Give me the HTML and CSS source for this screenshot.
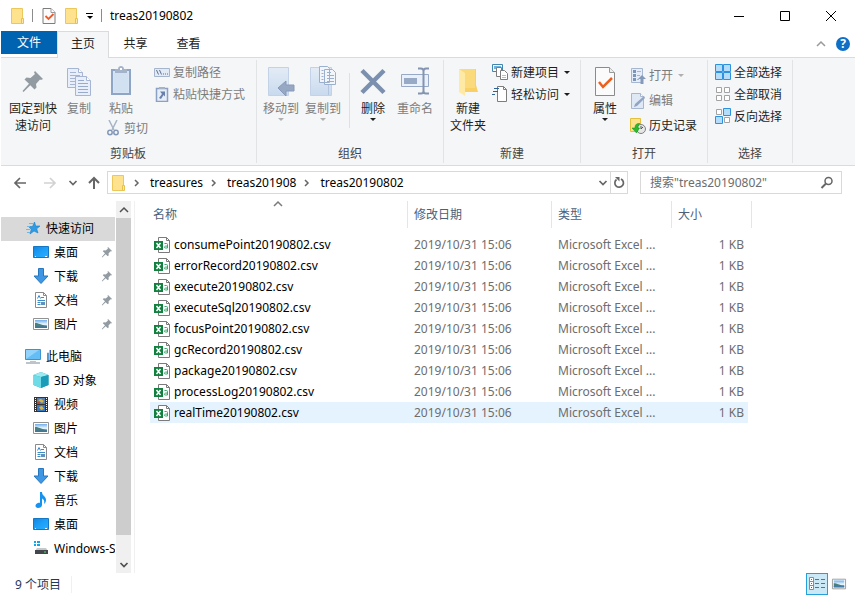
FILE: index.html
```html
<!DOCTYPE html>
<html lang="zh-CN">
<head>
    <meta charset="UTF-8">
    <title>treas20190802</title>
    <link rel="stylesheet" href="styles.css">
</head>
<body>
    <svg class="sprite">
        <defs>
            <linearGradient id="gPage" x1="0" x2="0" y1="0" y2="1"><stop offset="0" stop-color="#e3ecf6"/><stop offset="1" stop-color="#c9daee"/></linearGradient>
            <linearGradient id="gDesk" x1="0" x2="1" y1="0" y2="1"><stop offset="0" stop-color="#1583dc"/><stop offset=".5" stop-color="#1ca0f8"/><stop offset="1" stop-color="#2bb0ff"/></linearGradient>
            <linearGradient id="gSky" x1="0" x2="0" y1="0" y2="1"><stop offset="0" stop-color="#6fadea"/><stop offset=".5" stop-color="#e6f4fc"/><stop offset="1" stop-color="#cfe4f2"/></linearGradient>
        </defs>
        <symbol id="folder" viewBox="0 0 16 16">
            <path d="M2.500.5h11v15h-11z" fill="#ffe28e" stroke="#ecc75c"/>
            <path d="M12.500 15.500v-5h2v5z" fill="#ffe9a8" stroke="#e8c04c"/>
        </symbol>
        <symbol id="check" viewBox="0 0 13 16">
            <path d="M.5.5h8l4 4v11H.5z" fill="#fbfbfb" stroke="#7d7d7d"/>
            <path d="M8.500.5v4h4" fill="#fff" stroke="#9a9a9a"/>
            <path d="M3 8l3 3 5-5" fill="none" stroke="#ee5a28" stroke-width="1.800"/>
        </symbol>
        <symbol id="pin" viewBox="0 0 24 24">
            <path d="M14 2l8 8-2 1-1-.5-4 4.500.5 3.500-2 2-4.200-4.200L2.500 23l-1-1L8 14.700 3.500 10.500l2-2L9.500 9l4.500-4-1-1.500z" fill="#929aa2"/>
        </symbol>
        <symbol id="copy" viewBox="0 0 26 32">
            <g fill="#e8effa" stroke="#a6b6d2">
                <path d="M1.500 2.500h11l4 4v15h-15z"/><path d="M12.500 2.500v4h4" fill="#fff"/>
                <path d="M4 6.500h6M4 9.500h10M4 12.500h10M4 15.500h10M4 18.500h10"/>
                <path d="M9.500 10.500h11l4 4v15h-15z"/><path d="M20.500 10.500v4h4" fill="#fff"/>
                <path d="M12 14.500h6M12 17.500h10M12 20.500h10M12 23.500h10M12 26.500h10" stroke="#98abcb"/>
            </g>
        </symbol>
        <symbol id="paste" viewBox="0 0 22 32">
            <path d="M2 4h18v24H2z" fill="#d7e4f3" stroke="#8fa5c6" stroke-width="2"/>
            <path d="M4 7h14v19H4z" fill="#d2e1f2"/>
            <path d="M5 7V3h3c0-4 6-4 6 0h3v4z" fill="#a5b3c8"/><path d="M10 2h2v2h-2z" fill="#fff"/>
        </symbol>
        <symbol id="path" viewBox="0 0 16 16">
            <path d="M.5 4.500h15v8H.5z" fill="#e2ebf5" stroke="#a6b5cb"/>
            <path d="M2.500 6l2 4.500M5.500 6l2 4.500" stroke="#5d708f"/><path d="M9 9.500h1v1H9zM11 9.500h1v1h-1zM13 9.500h1v1h-1z" fill="#5d708f"/>
        </symbol>
        <symbol id="shortcut" viewBox="0 0 16 16">
            <path d="M2.500 2.500h11v13h-11z" fill="#e6eef8" stroke="#8ba0c2" stroke-width="1.500"/>
            <path d="M5 3V1h6v2z" fill="#a5b3c8"/>
            <path d="M6 5.500h5v5L9.500 9 7 13l-2-1 3-4z" fill="#6880ab"/>
        </symbol>
        <symbol id="cut" viewBox="0 0 16 16">
            <path d="M4 0l5 10M12 0l-5 10" stroke="#a7b4c7" stroke-width="1.500"/>
            <circle cx="5" cy="12.500" r="2.200" fill="none" stroke="#8397b8" stroke-width="1.500"/><circle cx="11" cy="12.500" r="2.200" fill="none" stroke="#8397b8" stroke-width="1.500"/>
        </symbol>
        <symbol id="moveto" viewBox="0 0 28 32">
            <path d="M1.500 1.500h20v28h-20z" fill="url(#gPage)" stroke="#c3d2e6"/><path d="M18.500 18v11" stroke="#b4c6df"/>
            <path d="M11 22l8-7v4h8v6h-8v5z" fill="#97a8c5" stroke="#8799b8"/>
        </symbol>
        <symbol id="copyto" viewBox="0 0 28 32">
            <path d="M1.500 1.500h21v28h-21z" fill="url(#gPage)" stroke="#c3d2e6"/><path d="M19.500 18v11" stroke="#b4c6df"/>
            <g fill="#f2f6fb" stroke="#9bb0cd">
                <path d="M10.500.5h8l2 2v14h-10zM15.500 3.500h8l3 3v12h-11z"/>
                <path d="M12.500 4.500h2M12.500 7.500h2M12.500 10.500h2M12.500 13.500h2M18 6.500h4M18 9.500h7M18 12.500h7M18 15.500h7"/>
            </g>
        </symbol>
        <symbol id="delete" viewBox="0 0 26 32">
            <path d="M2 4.500l22 22M24 4.500l-22 22" stroke="#7b8fae" stroke-width="4.500"/>
        </symbol>
        <symbol id="rename" viewBox="0 0 28 32">
            <path d="M.500 8.500h27v12H.500z" fill="#e9f0f9" stroke="#97a9c6"/><path d="M3 12h13v6H3z" fill="#98a9c5"/>
            <path d="M17 2.500h3q2.500 0 2.500 2.500 0-2.500 2.500-2.500h3M22.500 4v23M17 27.500h3q2.500 0 2.500-2.500 0 2.500 2.500 2.500h3" fill="none" stroke="#8294b1" stroke-width="2"/>
        </symbol>
        <symbol id="bigfolder" viewBox="0 0 20 32">
            <path d="M1 3h17v16l2 7H7V8z" fill="#f9d066"/><path d="M1 3h16v19H7V8z" fill="#fbda7c"/>
            <path d="M1 3l6 4v23l-6-4z" fill="#ffeaa5"/>
        </symbol>
        <symbol id="newitem" viewBox="0 0 16 16">
            <path d="M.5.500h10v7H.5z" fill="#fff" stroke="#3f87b0"/><path d="M2 2h7v3H2z" fill="#6eb4df"/>
            <path d="M4.500 3.500h5v9h-5z" fill="#fff" stroke="#7d7d7d"/><path d="M8.500 6.500h4l3 3v6h-7z" fill="#fff" stroke="#7d7d7d"/>
            <path d="M10 11.500h4M10 13.500h4" stroke="#9fc4dd"/>
        </symbol>
        <symbol id="easy" viewBox="0 0 16 16">
            <path d="M5.500.5h6l3 3v12h-9z" fill="#fff" stroke="#7d7d7d"/><path d="M11.500.5v3h3" fill="none" stroke="#7d7d7d"/>
            <path d="M2 2.500h5M1 5.500h5M0 8.500h3" stroke="#2f6398" stroke-width="1.200"/>
        </symbol>
        <symbol id="props" viewBox="0 0 22 32">
            <path d="M1.500 1.500h14l5 5v23h-19z" fill="#fbfbfb" stroke="#8b8b8b"/><path d="M15.500 1.500v5h5" fill="#eee" stroke="#9a9a9a"/>
            <path d="M5 16l4 5 9-9" fill="none" stroke="#ee5f1d" stroke-width="2.500"/>
        </symbol>
        <symbol id="open" viewBox="0 0 16 16">
            <path d="M1.500.5h11v14h-11z" fill="#e4edf8" stroke="#a7b7d1"/>
            <path d="M3 2h3v3H3zM3 6h3v3H3zM3 10h3v3H3z" fill="#7e95ba"/><path d="M7 3.500h4M7 7.500h3M7 11.500h2" stroke="#a7b7d1"/>
            <path d="M12 7l4 4h-2.500v5h-3v-5H8z" fill="#8599ba"/>
        </symbol>
        <symbol id="edit" viewBox="0 0 16 16">
            <path d="M1.500.5h9l3 3v12h-12z" fill="#dfe9f6" stroke="#a7b7d1"/><path d="M10.500.5v3h3" fill="#fff" stroke="#a7b7d1"/>
            <path d="M4 14l1-3 9-8 1 2-8 8z" fill="#91a5c3"/>
        </symbol>
        <symbol id="history" viewBox="0 0 16 16">
            <path d="M.5.5h10v13H.5z" fill="#ffe28e" stroke="#e5c03c"/>
            <circle cx="11" cy="11" r="4.500" fill="#e6e6e6" stroke="#808080"/><path d="M11 8v3l2-2" fill="none" stroke="#555"/>
            <path d="M10 5.500C5.500 5 5 8 5 10H2l4.500 5 3-5H8c0-2 .500-3 2-4.500z" fill="#2dbb2d" stroke="#178a17" stroke-width=".5"/>
        </symbol>
        <symbol id="all" viewBox="0 0 16 16">
            <path d="M.5.5h7v7h-7zM8.500.5h7v7h-7zM.5 8.500h7v7h-7zM8.500 8.500h7v7h-7z" fill="#b6dcfb" stroke="#2c92e0"/>
        </symbol>
        <symbol id="none" viewBox="0 0 16 16">
            <path d="M1.500 1.500h5v5h-5zM9.500 1.500h5v5h-5zM1.500 9.500h5v5h-5zM9.500 9.500h5v5h-5z" fill="#fff" stroke="#a3a3a3"/>
        </symbol>
        <symbol id="invert" viewBox="0 0 16 16">
            <path d="M1.500 1.500h5v5h-5zM9.500 9.500h5v5h-5z" fill="#fff" stroke="#a3a3a3"/>
            <path d="M8.500.5h7v7h-7zM.5 8.500h7v7h-7z" fill="#b6dcfb" stroke="#2c92e0"/>
        </symbol>
        <symbol id="left" viewBox="0 0 14 14"><path d="M13 7H2M7 2L2 7l5 5" fill="none" stroke="currentColor" stroke-width="1.700"/></symbol>
        <symbol id="right" viewBox="0 0 14 14"><path d="M1 7h11M7 2l5 5-5 5" fill="none" stroke="currentColor" stroke-width="1.700"/></symbol>
        <symbol id="up" viewBox="0 0 14 14"><path d="M7 13V2M2 7l5-5 5 5" fill="none" stroke="currentColor" stroke-width="2"/></symbol>
        <symbol id="chevdown" viewBox="0 0 10 10"><path d="M1.500 3L5 6.500 8.500 3" fill="none" stroke="currentColor" stroke-width="1.700"/></symbol>
        <symbol id="chevup" viewBox="0 0 10 10"><path d="M1 7l4-4 4 4" fill="none" stroke="currentColor" stroke-width="1.500"/></symbol>
        <symbol id="chevright" viewBox="0 0 10 10"><path d="M3 2l3 3-3 3" fill="none" stroke="currentColor" stroke-width="1.500"/></symbol>
        <symbol id="star" viewBox="0 0 16 16">
            <path d="M9.500 2l1.200 4H15l-3.300 2.800L13 13l-4-2-4 3 1.200-4.700L3.500 6.500h4z" fill="#2f9be6" stroke="#1b7fc4" stroke-width=".6"/>
            <path d="M4 3.500h4M2 6.500h3M1 9.500h4M2 12.500h3" stroke="#67b9ee"/>
        </symbol>
        <symbol id="desktop" viewBox="0 0 16 16">
            <path d="M.5 2.500h15v11H.5z" fill="url(#gDesk)" stroke="#1477c4"/><path d="M2 12.500h1M12 12.500h2" stroke="#fff"/>
        </symbol>
        <symbol id="download" viewBox="0 0 16 16">
            <path d="M5.500.5h5V8h4.500l-7 7.500L1 8h4.500z" fill="#3f97e4" stroke="#2877bd"/>
        </symbol>
        <symbol id="doc" viewBox="0 0 16 16">
            <path d="M2.500.5h8l3 3v12h-11z" fill="#fff" stroke="#8a8a8a"/><path d="M10.500.5v3h3" fill="none" stroke="#8a8a8a"/>
            <path d="M4.500 6.500l1.500-3 1.500 3M8 5.500h3M4.500 8.500H12M4.500 10.500h3M4.500 12.500h3" fill="none" stroke="#3b8ccb"/><path d="M8 10h4v3H8z" fill="#5c93bf"/>
        </symbol>
        <symbol id="picture" viewBox="0 0 16 16">
            <path d="M.5 2.500h15v11H.5z" fill="#fff" stroke="#929292"/><path d="M2 4h12v8H2z" fill="url(#gSky)"/>
            <path d="M2 7c4 0 5 2 12 2.500V11H2z" fill="#4c7f78"/><path d="M2 10.500h12V12H2z" fill="#3a76ad"/>
        </symbol>
        <symbol id="pc" viewBox="0 0 16 16">
            <path d="M.5 1.500h15v10H.5z" fill="#64bdf5" stroke="#3b93cf"/><path d="M1 11V2h13z" fill="#91d3fb"/>
            <path d="M5 13.500h6" stroke="#b9c5cf"/><path d="M1 15h14" stroke="#788a99"/>
        </symbol>
        <symbol id="cube" viewBox="0 0 16 16">
            <path d="M8 0l7.500 3v10L8 16 .5 13V3z" fill="#2ba8bf"/><path d="M8 0l7.500 3L8 5 .5 3z" fill="#9de9f0"/><path d="M.5 3L8 5v11L.5 13z" fill="#6fdbe6"/><path d="M8 5l7.500-2v10L8 16z" fill="#1a9cb8"/>
        </symbol>
        <symbol id="video" viewBox="0 0 16 16">
            <path d="M1 1h14v15H1z" fill="#333"/><path d="M4 2h8v6H4z" fill="#577fb2"/><path d="M4 9h8v6H4z" fill="#3978c5"/>
            <path d="M5 4l3-1 3 2-2 2zM6 11l3-1 2 3-3 1z" fill="#dfb43c"/><path d="M4 6h3v2H4z" fill="#c4442a"/>
            <path d="M2.500 2v13M13.500 2v13" stroke="#fff" stroke-dasharray="1 1"/>
        </symbol>
        <symbol id="music" viewBox="0 0 16 16">
            <path d="M7 0h2c0 4 4 4 4 8 0 2-1 3-2 4 1-4-1-5-2-5.500V13c0 2-2 3-4 3-3 0-3.500-4 0-5 1-.3 2 0 2 0z" fill="#1593ef"/>
        </symbol>
        <symbol id="drive" viewBox="0 0 16 16">
            <path d="M1 1h2v2H1zM4 1h3v2H4zM1 4h2v2H1zM4 4h3v2H4z" fill="#13a5e5"/>
            <path d="M4 8h9l2 3H2z" fill="#c6c9cc"/><path d="M2 10h13v4H2z" fill="#43474b"/><path d="M11 12h2" stroke="#55e06f"/>
        </symbol>
        <symbol id="csv" viewBox="0 0 16 16">
            <path d="M4.500.5h8l3 3v12h-11z" fill="#fff" stroke="#7b7b7b"/><path d="M12.500.5v3h3" fill="none" stroke="#7b7b7b"/>
            <path d="M0 4h9v9H0z" fill="#12813f"/><path d="M2.500 6l4 5M6.500 6l-4 5" stroke="#fff" stroke-width="1.500"/>
            <path d="M10.500 6.500h2q1 0 1 1v3.500h-2q-1.200 0-1-1.200.2-.8 3-.8" fill="none" stroke="#35a86a"/>
        </symbol>
        <symbol id="search" viewBox="0 0 14 14"><circle cx="8.500" cy="5" r="3.500" fill="none" stroke="#666" stroke-width="1.500"/><path d="M6 7.500L1.500 12" stroke="#666" stroke-width="2"/></symbol>
        <symbol id="refresh" viewBox="0 0 14 14"><path d="M9 3A4.300 4.300 0 1 1 4.500 3.500" fill="none" stroke="#666" stroke-width="1.700"/><path d="M3 1h4.500v4.500z" fill="#666"/></symbol>
        <symbol id="details" viewBox="0 0 16 14">
            <path d="M.5.5h4v12h-4zM.5 4.500h4M.5 8.500h4" fill="#fff" stroke="#8c8c8c"/><path d="M2 2h1v1H2z" fill="#3a8f3a"/><path d="M2 6h1v1H2z" fill="#2b7ad0"/><path d="M2 10h1v1H2z" fill="#d02020"/>
            <path d="M6 2.500h4M12 2.500h4M6 6.500h4M12 6.500h4M6 10.500h4M12 10.500h4" stroke="#6e6e6e"/>
        </symbol>
    </svg>

    <div id="wrap">
        <header class="title">
            <svg class="i16"><use href="#folder"/></svg>
            <i class="line"></i>
            <button class="quick" aria-label="属性"><svg class="i16"><use href="#check"/></svg></button>
            <button class="quick" aria-label="新建文件夹"><svg class="i16"><use href="#folder"/></svg></button>
            <button class="quick more" aria-label="自定义快速访问工具栏"></button>
            <i class="line"></i>
            <h1>treas20190802</h1>
            <div class="win">
                <button aria-label="最小化"><svg viewBox="0 0 12 12"><path d="M1 6.500h10" stroke="#000"/></svg></button>
                <button aria-label="最大化"><svg viewBox="0 0 12 12"><path d="M1.500 1.500h9v9h-9z" fill="none" stroke="#000"/></svg></button>
                <button aria-label="关闭"><svg viewBox="0 0 12 12"><path d="M1 1l10 10M11 1L1 11" stroke="#000"/></svg></button>
            </div>
        </header>

        <nav class="tabs">
            <button class="file">文件</button>
            <button class="tab active">主页</button>
            <button class="tab">共享</button>
            <button class="tab">查看</button>
            <div class="help">
                <button class="fold" aria-label="最小化功能区"><svg class="i10"><use href="#chevup"/></svg></button>
                <button class="ask" aria-label="帮助">?</button>
            </div>
        </nav>

        <section class="ribbon">
            <div class="group g-clip">
                <div class="tools">
                    <button class="big wide"><svg><use href="#pin" x="4" y="3" width="24" height="24"/></svg>固定到快速访问</button>
                    <button class="big" disabled><svg><use href="#copy"/></svg>复制</button>
                    <div class="stack">
                        <button class="big" disabled><svg><use href="#paste"/></svg>粘贴</button>
                        <button class="small" disabled><svg class="i16"><use href="#cut"/></svg>剪切</button>
                    </div>
                    <div class="list">
                        <button class="small" disabled><svg class="i16"><use href="#path"/></svg>复制路径</button>
                        <button class="small" disabled><svg class="i16"><use href="#shortcut"/></svg>粘贴快捷方式</button>
                    </div>
                </div>
                <p>剪贴板</p>
            </div>
            <div class="group g-org">
                <div class="tools">
                    <button class="big drop" disabled><svg><use href="#moveto"/></svg>移动到</button>
                    <button class="big drop" disabled><svg><use href="#copyto"/></svg>复制到</button>
                    <i class="split"></i>
                    <button class="big drop"><svg><use href="#delete"/></svg>删除</button>
                    <button class="big" disabled><svg><use href="#rename"/></svg>重命名</button>
                </div>
                <p>组织</p>
            </div>
            <div class="group g-new">
                <div class="tools">
                    <button class="big wide"><svg><use href="#bigfolder"/></svg>新建<br>文件夹</button>
                    <div class="list">
                        <button class="small drop"><svg class="i16"><use href="#newitem"/></svg>新建项目</button>
                        <button class="small drop"><svg class="i16"><use href="#easy"/></svg>轻松访问</button>
                    </div>
                </div>
                <p>新建</p>
            </div>
            <div class="group g-open">
                <div class="tools">
                    <button class="big drop"><svg><use href="#props"/></svg>属性</button>
                    <div class="list loose">
                        <button class="small drop" disabled><svg class="i16"><use href="#open"/></svg>打开</button>
                        <button class="small" disabled><svg class="i16"><use href="#edit"/></svg>编辑</button>
                        <button class="small"><svg class="i16"><use href="#history"/></svg>历史记录</button>
                    </div>
                </div>
                <p>打开</p>
            </div>
            <div class="group g-sel">
                <div class="tools">
                    <div class="list">
                        <button class="small"><svg class="i16"><use href="#all"/></svg>全部选择</button>
                        <button class="small"><svg class="i16"><use href="#none"/></svg>全部取消</button>
                        <button class="small"><svg class="i16"><use href="#invert"/></svg>反向选择</button>
                    </div>
                </div>
                <p>选择</p>
            </div>
        </section>

        <section class="nav">
            <div class="arrows">
                <button aria-label="后退"><svg class="i14"><use href="#left"/></svg></button>
                <button aria-label="前进" class="off"><svg class="i14"><use href="#right"/></svg></button>
                <button aria-label="最近浏览的位置" class="recent"><svg class="i10"><use href="#chevdown"/></svg></button>
                <button aria-label="上移"><svg class="i14"><use href="#up"/></svg></button>
            </div>
            <div class="address">
                <svg class="i16"><use href="#folder"/></svg>
                <svg class="i10"><use href="#chevright"/></svg>
                <a href="#">treasures</a>
                <svg class="i10"><use href="#chevright"/></svg>
                <a href="#">treas201908</a>
                <svg class="i10"><use href="#chevright"/></svg>
                <a href="#">treas20190802</a>
                <button class="history" aria-label="以前的位置"><svg class="i10"><use href="#chevdown"/></svg></button>
                <button class="refresh" aria-label="刷新"><svg class="i14"><use href="#refresh"/></svg></button>
            </div>
            <div class="search">
                <input type="text" aria-label="搜索" placeholder='搜索"treas20190802"'>
                <svg class="i14"><use href="#search"/></svg>
            </div>
        </section>

        <main>
            <aside>
                <ul>
                    <li class="root on"><svg class="i16"><use href="#star"/></svg>快速访问</li>
                    <li><svg class="i16"><use href="#desktop"/></svg>桌面<svg class="pin"><use href="#pin"/></svg></li>
                    <li><svg class="i16"><use href="#download"/></svg>下载<svg class="pin"><use href="#pin"/></svg></li>
                    <li><svg class="i16"><use href="#doc"/></svg>文档<svg class="pin"><use href="#pin"/></svg></li>
                    <li><svg class="i16"><use href="#picture"/></svg>图片<svg class="pin"><use href="#pin"/></svg></li>
                </ul>
                <ul>
                    <li class="root"><svg class="i16"><use href="#pc"/></svg>此电脑</li>
                    <li><svg class="i16"><use href="#cube"/></svg>3D 对象</li>
                    <li><svg class="i16"><use href="#video"/></svg>视频</li>
                    <li><svg class="i16"><use href="#picture"/></svg>图片</li>
                    <li><svg class="i16"><use href="#doc"/></svg>文档</li>
                    <li><svg class="i16"><use href="#download"/></svg>下载</li>
                    <li><svg class="i16"><use href="#music"/></svg>音乐</li>
                    <li><svg class="i16"><use href="#desktop"/></svg>桌面</li>
                    <li><svg class="i16"><use href="#drive"/></svg>Windows-S</li>
                </ul>
            </aside>
            <div class="scroll">
                <button aria-label="向上滚动"><svg class="i10"><use href="#chevup"/></svg></button>
                <div class="thumb"></div>
                <button aria-label="向下滚动"><svg class="i10"><use href="#chevdown"/></svg></button>
            </div>
            <div class="files">
                <table>
                    <thead>
                        <tr>
                            <th class="name">名称<svg class="i10"><use href="#chevup"/></svg></th>
                            <th class="date">修改日期</th>
                            <th class="type">类型</th>
                            <th class="size">大小</th>
                        </tr>
                    </thead>
                    <tbody>
                        <tr><td><svg class="i16"><use href="#csv"/></svg>consumePoint20190802.csv</td><td>2019/10/31 15:06</td><td>Microsoft Excel ...</td><td>1 KB</td></tr>
                        <tr><td><svg class="i16"><use href="#csv"/></svg>errorRecord20190802.csv</td><td>2019/10/31 15:06</td><td>Microsoft Excel ...</td><td>1 KB</td></tr>
                        <tr><td><svg class="i16"><use href="#csv"/></svg>execute20190802.csv</td><td>2019/10/31 15:06</td><td>Microsoft Excel ...</td><td>1 KB</td></tr>
                        <tr><td><svg class="i16"><use href="#csv"/></svg>executeSql20190802.csv</td><td>2019/10/31 15:06</td><td>Microsoft Excel ...</td><td>1 KB</td></tr>
                        <tr><td><svg class="i16"><use href="#csv"/></svg>focusPoint20190802.csv</td><td>2019/10/31 15:06</td><td>Microsoft Excel ...</td><td>1 KB</td></tr>
                        <tr><td><svg class="i16"><use href="#csv"/></svg>gcRecord20190802.csv</td><td>2019/10/31 15:06</td><td>Microsoft Excel ...</td><td>1 KB</td></tr>
                        <tr><td><svg class="i16"><use href="#csv"/></svg>package20190802.csv</td><td>2019/10/31 15:06</td><td>Microsoft Excel ...</td><td>1 KB</td></tr>
                        <tr><td><svg class="i16"><use href="#csv"/></svg>processLog20190802.csv</td><td>2019/10/31 15:06</td><td>Microsoft Excel ...</td><td>1 KB</td></tr>
                        <tr class="hover"><td><svg class="i16"><use href="#csv"/></svg>realTime20190802.csv</td><td>2019/10/31 15:06</td><td>Microsoft Excel ...</td><td>1 KB</td></tr>
                    </tbody>
                </table>
            </div>
        </main>

        <footer>
            <p>9 个项目</p>
            <div class="views">
                <button class="on" aria-label="详细信息"><svg><use href="#details"/></svg></button>
                <button aria-label="大图标"><svg><use href="#picture"/></svg></button>
            </div>
        </footer>
    </div>
</body>
</html>
```
FILE: styles.css
```css
*{box-sizing: border-box;}
body,h1,p{margin: 0;}
ul,li{margin: 0;padding: 0;list-style: none;}
body,button,input{
    font-family: "Noto Sans","Noto Sans CJK SC",sans-serif;
    font-size: 12px;
    line-height: 17px;
    color: #000;
}
button{
    padding: 0;
    border: none;
    background: none;
}
svg{flex: none;display: block;}
.sprite{position: absolute;width: 0;height: 0;}
.i16{width: 16px;height: 16px;}
.i14{width: 14px;height: 14px;}
.i10{width: 10px;height: 10px;}

#wrap{
    display: flex;
    flex-direction: column;
    min-height: 100vh;
    padding-left: 1px;
    background: #fff;
}

/* 标题栏 */
.title{
    display: flex;
    align-items: center;
    height: 31px;
    padding-left: 8px;
}
.title .line{
    width: 1px;
    height: 13px;
    margin: 0 8px 0 7px;
    background: #8c8c8c;
}
.title .quick{
    margin-right: 6px;
}
.title .more{
    width: 7px;
    height: 7px;
    margin: 2px 1px 0 1px;
    border-top: 1px solid #000;
}
.title .more::after,
.drop::after{
    content: "";
    display: block;
    width: 0;
    margin: 1px auto 0;
    border: 3px solid transparent;
    border-top-color: currentColor;
    border-bottom: none;
}
.title h1{
    font-size: 12px;
    font-weight: normal;
}
.win{
    display: flex;
    margin-left: auto;
    padding-right: 1px;
}
.win button{
    display: flex;
    align-items: center;
    justify-content: center;
    width: 46px;
    height: 30px;
}
.win svg{width: 12px;height: 12px;}

/* 选项卡 */
.tabs{
    display: flex;
    height: 27px;
    border-bottom: 1px solid #dadbdc;
}
.tabs .file{
    width: 56px;
    height: 23px;
    background: #0063b1;
    color: #fff;
}
.tabs .tab{
    width: 53px;
    height: 27px;
    padding-bottom: 3px;
    color: #222;
}
.tabs .active{
    width: 52px;
    border: 1px solid #dadbdc;
    border-bottom: none;
    background: #f5f6f7;
}
.help{
    display: flex;
    align-items: center;
    gap: 10px;
    margin-left: auto;
    padding-right: 5px;
}
.help .fold{color: #999;}
.help .ask{
    width: 14px;
    height: 14px;
    border-radius: 50%;
    background: #0f6fc6;
    color: #fff;
    font-weight: bold;
    line-height: 14px;
}

/* 功能区 */
.ribbon{
    display: flex;
    height: 108px;
    border-bottom: 1px solid #dadbdc;
    background: #f5f6f7;
}
.group{
    display: flex;
    flex-direction: column;
    margin: 2px 0;
    border-right: 1px solid #e2e3e4;
}
.group .tools{
    display: flex;
    flex: 1;
}
.group p{
    padding-bottom: 1px;
    text-align: center;
    color: #444;
}
.g-clip{width: 256px;padding: 0 8px 0 7px;}
.g-org{width: 187px;padding: 0 3px;}
.g-new{width: 137px;}
.g-open{width: 127px;padding: 0 3px;}
.g-sel{width: 85px;}
.big{
    display: block;
    align-self: flex-start;
    flex: none;
    width: 42px;
    padding-top: 6px;
    color: #1e1e1e;
    white-space: nowrap;
}
.big svg{
    width: 32px;
    height: 32px;
    margin: 0 auto 2px;
}
.big.wide{
    width: 50px;
    white-space: normal;
}
.g-new .wide{width: 48px;}
.small{
    display: flex;
    align-items: center;
    gap: 3px;
    height: 22px;
    color: #1e1e1e;
    white-space: nowrap;
}
.small.drop::after{margin: 0 0 0 2px;}
.big:disabled,
.small:disabled{color: #7c7c7c;}
.drop:disabled::after{border-top-color: #b0b0b0;}
.stack{width: 48px;}
.stack .small{margin-left: 5px;}
.list{
    padding-top: 1px;
    padding-left: 6px;
}
.g-new .list{padding-left: 0;}
.g-sel .list{padding-left: 7px;}
.loose{padding: 3px 0 0 4px;}
.loose .small{height: 25px;}
.split{
    width: 1px;
    height: 55px;
    margin: 13px 2px 0 5px;
    background: #dfe0e1;
}

/* 地址栏 */
.nav{
    display: flex;
    height: 35px;
    padding: 5px 13px 7px 12px;
}
.nav button{color: #666;}
.arrows{
    display: flex;
    align-items: center;
    width: 94px;
}
.arrows button{margin-right: 16px;}
.arrows .off{margin-right: 11px;color: #d2d2d2;}
.arrows .recent{margin-right: 9px;}
.arrows button:last-child{margin-right: 0;}
.address{
    display: flex;
    flex: 1;
    align-items: center;
    min-width: 0;
    border: 1px solid #d9d9d9;
    padding-left: 2px;
    color: #666;
}
.address a{
    color: #000;
    text-decoration: none;
}
.address .i10{margin: 0 8px 0 6px;}
.address .history{margin-left: auto;}
.address .history .i10{margin: 0 2px;}
.address .refresh{
    height: 21px;
    padding: 0 1px;
    border-left: 1px solid #d9d9d9;
}
.search{
    display: flex;
    align-items: center;
    width: 202px;
    margin-left: 12px;
    padding: 0 7px 0 9px;
    border: 1px solid #d9d9d9;
}
.search input{
    flex: 1;
    min-width: 0;
    padding: 0;
    border: none;
    outline: none;
}
.search input::placeholder{color: #6d6d6d;}

/* 主体 */
main{
    display: flex;
    flex: 1;
}
aside{
    width: 114px;
    padding-top: 16px;
    overflow: hidden;
}
aside ul{margin-bottom: 8px;}
aside ul:last-child{margin-bottom: 0;}
aside li{
    display: flex;
    align-items: center;
    gap: 5px;
    height: 24px;
    padding: 0 0 2px 32px;
    white-space: nowrap;
}
aside .root{padding-left: 24px;}
aside .on{background: #d9d9d9;}
aside .pin{
    width: 12px;
    height: 12px;
    margin: 0 2px 0 auto;
}
.scroll{
    display: flex;
    flex-direction: column;
    width: 17px;
    margin-left: 1px;
    padding-right: 1px;
    border-right: 1px solid #fff;
    background: #f0f0f0 content-box;
}
.scroll button{
    display: flex;
    align-items: center;
    justify-content: center;
    height: 17px;
    color: #505050;
}
.scroll .thumb{
    flex: 1;
    margin-bottom: 21px;
    background: #cdcdcd;
}
.files{
    flex: 1;
    margin-left: 1px;
    padding-left: 15px;
    border-left: 1px solid #f0f0f0;
}
table{
    width: 602px;
    table-layout: fixed;
    border-spacing: 0;
}
th{
    position: relative;
    height: 27px;
    padding: 0 0 0 6px;
    border-right: 1px solid #e5e5e5;
    font-weight: normal;
    text-align: left;
    color: #4c607a;
}
th .i10{
    position: absolute;
    top: -2px;
    left: calc(50% - 6px);
    color: #7a7a7a;
}
th.name{width: 258px;padding-left: 3px;}
.date{width: 144px;}
.type{width: 120px;}
tbody::before{
    content: "";
    display: block;
    height: 6px;
}
td{
    height: 21px;
    padding: 0 0 0 6px;
    color: #6d6d6d;
    white-space: nowrap;
}
td:first-child{
    padding-left: 4px;
    color: #000;
}
td svg{
    display: inline-block;
    margin-right: 4px;
    vertical-align: middle;
}
td:last-child{
    padding-right: 4px;
    border-right: 4px solid #fff;
    text-align: right;
}
.hover td{background: #e5f3ff;}

/* 状态栏 */
footer{
    display: flex;
    align-items: center;
    height: 24px;
    padding: 0 5px 2px 14px;
    color: #1e395b;
}
footer p{
    padding-right: 10px;
    border-right: 1px solid #f0f0f0;
}
.views{
    display: flex;
    margin-left: auto;
}
.views button{
    display: flex;
    align-items: center;
    justify-content: center;
    width: 22px;
    height: 22px;
}
.views .on{
    border: 1px solid #26a0da;
    background: #cbe8f6;
}
.views svg{width: 16px;height: 14px;}
```
